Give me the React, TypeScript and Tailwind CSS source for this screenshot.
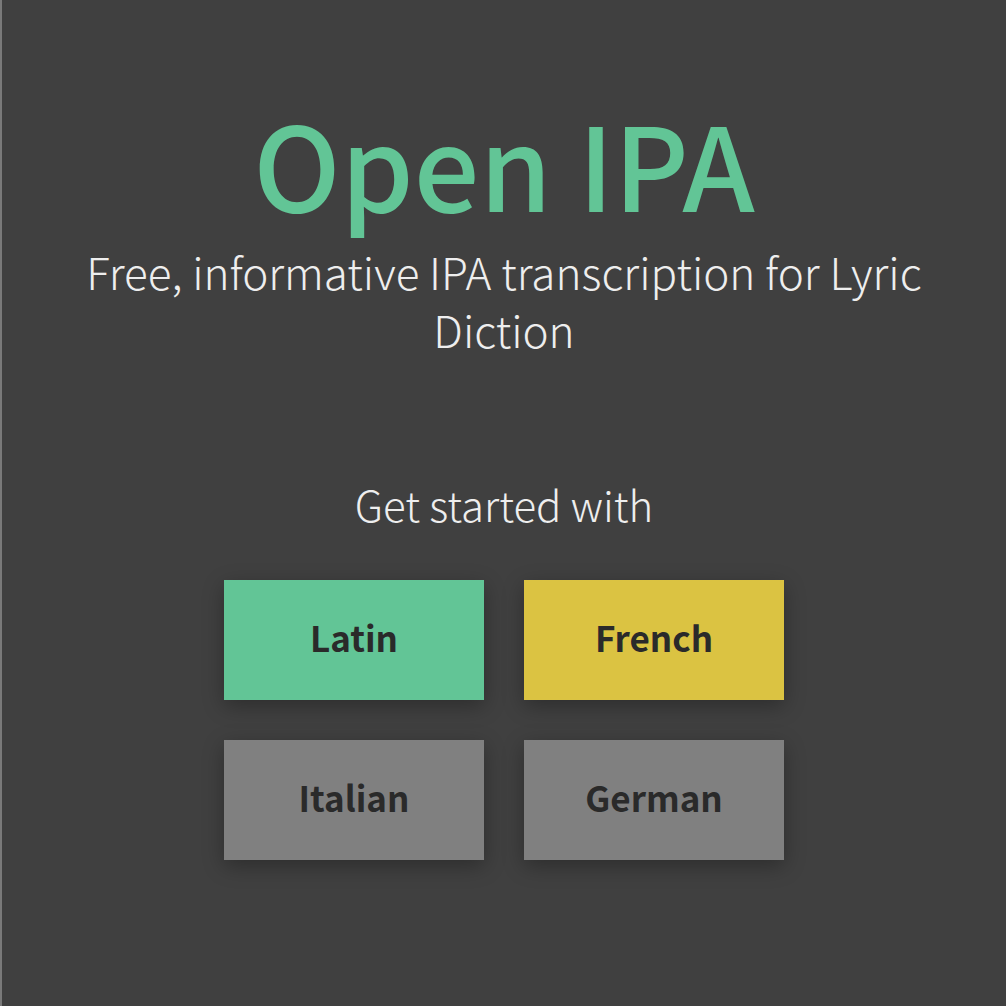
import React from 'react';

const langs = [
  { name: 'Latin', color: 'bg-[#62c596]' },
  { name: 'French', color: 'bg-[#dbc342]' },
  { name: 'Italian', color: 'bg-[#808080]' },
  { name: 'German', color: 'bg-[#808080]' },
];

export default function App() {
  return (
    <div className="w-[1006px] h-[1006px] bg-[#404040] border-l-2 border-[#7a7a7a] flex flex-col items-center font-['Noto_Sans_CJK_KR',sans-serif]">
      <h1 className="mt-[86px] text-[116px] leading-[150px] font-medium text-[#62c596]">Open IPA</h1>
      <p className="mt-[6px] w-[880px] text-center text-[44px] leading-[58px] font-light text-[#eeeeee]">
        Free, informative IPA transcription for Lyric Diction
      </p>
      <p className="mt-[116px] text-[42px] leading-[60px] font-light text-[#eeeeee]">Get started with</p>
      <div className="mt-[46px] grid grid-cols-[260px_260px] gap-[40px]">
        {langs.map((l) => (
          <button
            key={l.name}
            className={`${l.color} h-[120px] flex items-center justify-center pb-[6px] text-[35px] font-bold text-[#2a2a2a] shadow-[0_6px_20px_rgba(0,0,0,0.3)]`}
          >
            {l.name}
          </button>
        ))}
      </div>
    </div>
  );
}
